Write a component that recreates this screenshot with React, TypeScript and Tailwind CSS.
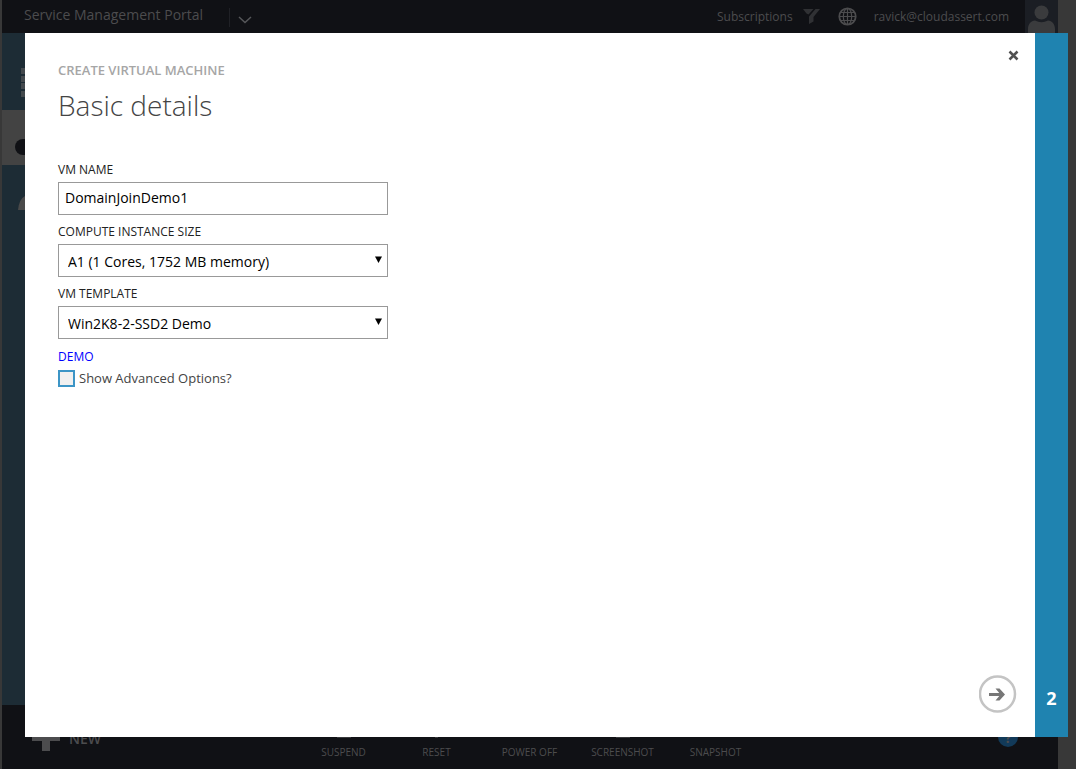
import { useState } from "react";
import type { ReactNode } from "react";

const commands = [
  { label: "SUSPEND", hint: "w-[14px]" },
  { label: "RESET", hint: "w-[3px]" },
  { label: "POWER OFF", hint: "w-0" },
  { label: "SCREENSHOT", hint: "w-[14px]" },
  { label: "SNAPSHOT", hint: "w-0" },
];

const sizes = ["A1 (1 Cores, 1752 MB memory)", "A2 (2 Cores, 3584 MB memory)"];
const templates = ["Win2K8-2-SSD2 Demo"];

const fieldClass =
  "block h-[33px] w-full appearance-none rounded-none border border-[#999999] bg-white text-[14px] text-black outline-none";

function Field({ id, label, children }: { id: string; label: string; children: ReactNode }) {
  return (
    <div>
      <label htmlFor={id} className="block pt-[7px] pb-[2px] text-[12px] leading-[20px] text-[#222222]">
        {label}
      </label>
      {children}
    </div>
  );
}

function SelectField({ id, label, options }: { id: string; label: string; options: string[] }) {
  return (
    <Field id={id} label={label}>
      <div className="relative">
        <select id={id} className={`${fieldClass} pt-[2px] pr-6 pl-[9px]`}>
          {options.map((o) => (
            <option key={o}>{o}</option>
          ))}
        </select>
        <svg className="pointer-events-none absolute top-3 right-[6px] h-[7px] w-[7px]" viewBox="0 0 7 7">
          <path d="M0 0.5h7L3.5 7z" fill="#000" />
        </svg>
      </div>
    </Field>
  );
}

function Header() {
  return (
    <header className="flex h-[33px] shrink-0 bg-[#101115] text-[#4c4c4e]">
      <div className="flex flex-1 pl-[22px]">
        <h1 className="text-[14px] leading-[30px]">Service Management Portal</h1>
        <button aria-label="Open menu" className="mt-2 ml-[26px] flex h-[19px] items-center border-l border-[#202126] pl-2">
          <svg width="14" height="8" viewBox="0 0 14 8" className="mt-1" fill="none" stroke="#56575a" strokeWidth="1.5">
            <path d="M1 1l6 5.5L13 1" />
          </svg>
        </button>
      </div>
      <div className="flex items-center text-[12px]">
        <button className="flex items-center gap-[10px]">
          Subscriptions
          <svg width="17" height="15" viewBox="0 0 17 15" fill="#303134">
            <path d="M0 0h10.500L5.500 5.500 3.500 4.500z" />
            <path d="M12.500 0H17L10.500 8v4.500L6 15V7.500z" />
          </svg>
        </button>
        <button aria-label="Language" className="ml-[18px]">
          <svg width="19" height="19" viewBox="0 0 19 19" fill="none" stroke="#4c4c4e" strokeWidth="1.5">
            <circle cx="9.5" cy="9.5" r="8.2" strokeWidth="1.8" />
            <ellipse cx="9.5" cy="9.5" rx="4.2" ry="8" strokeWidth="1.2" />
            <path d="M9.5 1.5v16M1.5 9.5h16M2.5 5.5h14M2.5 13.5h14" strokeWidth="1.2" />
          </svg>
        </button>
        <span className="ml-[17px]">ravick@cloudassert.com</span>
        <div className="ml-4 h-[33px] w-[33px] bg-[#1b1e24]">
          <svg width="33" height="33" viewBox="0 0 33 33" fill="#3a3b3d">
            <circle cx="16.5" cy="12.5" r="7" />
            <path d="M3 33v-4c0-5 3-8 7-8.500q6.500 3.500 13 0c4 .5 7 3.500 7 8.500v4z" />
          </svg>
        </div>
      </div>
    </header>
  );
}

function Sidebar() {
  return (
    <nav className="flex w-[60px] flex-1 flex-col bg-[#1d2c35]">
      <button aria-label="All items" className="h-[77px]">
        <svg width="24" height="30" viewBox="0 0 24 30" className="mt-[22px] ml-[19px]" fill="#43494d">
          <path d="M0 0h24v6H0zM0 8h24v6H0zM0 15h24v6H0zM0 23h24v6H0z" />
        </svg>
      </button>
      <button aria-label="Virtual machines" className="h-[55px] bg-[#434343]">
        <svg width="30" height="16" viewBox="0 0 30 16" className="mt-[18px] ml-[13px]">
          <rect width="30" height="16" rx="8" fill="#101115" />
        </svg>
      </button>
      <button aria-label="Users" className="h-[77px]">
        <svg width="26" height="16" viewBox="0 0 26 16" className="ml-[16px]" fill="#4a4a4a">
          <path d="M0 14Q1 3 7 0h12q6 3 7 14z" />
        </svg>
      </button>
    </nav>
  );
}

function CommandBar() {
  return (
    <footer className="flex h-16 shrink-0 bg-[#101115] text-[#4c4c4e]">
      <button className="flex h-full w-[295px] items-start gap-[9px] pt-[18px] pl-[30px]">
        <svg width="28" height="28" viewBox="0 0 28 28" fill="#4c4c4e">
          <path d="M10 0h8v10h10v8H18v10h-8V18H0v-8h10z" />
        </svg>
        <span className="mt-[6px] text-[14px] leading-5 font-semibold">NEW</span>
      </button>
      {commands.map((c) => (
        <button key={c.label} className="flex w-[93px] flex-col items-center pt-[20px] text-[10px] leading-5">
          <span className={`${c.hint} h-[13px] bg-[#38393b]`} />
          <span className="mt-1">{c.label}</span>
        </button>
      ))}
      <button aria-label="Help" className="mt-[22px] mr-10 ml-auto flex h-5 w-5 items-center justify-center rounded-full bg-[#123a59] text-[14px] font-bold">
        ?
      </button>
    </footer>
  );
}

function CreateVmDialog() {
  const [name, setName] = useState("DomainJoinDemo1");
  const [advanced, setAdvanced] = useState(false);

  return (
    <div role="dialog" aria-label="Create virtual machine" className="fixed top-[33px] right-2 bottom-8 left-[25px] flex bg-white">
      <div className="flex flex-1 flex-col pl-[33px]">
        <div className="flex justify-between">
          <div className="pt-[27px]">
            <p className="text-[13px] leading-[20px] font-semibold text-[#a6a6a6]">CREATE VIRTUAL MACHINE</p>
            <h2 className="mt-[5px] text-[28px] leading-[40px] font-light text-[#444444]">Basic details</h2>
          </div>
          <button aria-label="Close" className="mt-4 mr-4 h-3 w-[11px]">
            <svg width="11" height="11" viewBox="0 0 11 11" fill="none" stroke="#505050" strokeWidth="2.5">
              <path d="M1.500 1.500l8 8M9.500 1.500l-8 8" />
            </svg>
          </button>
        </div>

        <form className="mt-7 w-[330px]">
          <Field id="vm-name" label="VM NAME">
            <input id="vm-name" type="text" value={name} onChange={(e) => setName(e.target.value)} className={`${fieldClass} px-[6px] pb-[2px]`} />
          </Field>
          <SelectField id="size" label="COMPUTE INSTANCE SIZE" options={sizes} />
          <SelectField id="template" label="VM TEMPLATE" options={templates} />
          <a href="#demo" className="mt-2 block w-fit text-[12px] leading-[20px] text-[#0000ff]">
            DEMO
          </a>
          <div className="mt-[3px] flex items-center gap-1">
            <input
              id="advanced"
              type="checkbox"
              checked={advanced}
              onChange={(e) => setAdvanced(e.target.checked)}
              className="h-[17px] w-[17px] appearance-none border-2 border-[#3c95c6] bg-[#f0f0f0] checked:bg-[#3c95c6]"
            />
            <label htmlFor="advanced" className="text-[13px] leading-[17px] text-[#444444]">
              Show Advanced Options?
            </label>
          </div>
        </form>

        <button aria-label="Next" className="mt-auto mr-[18px] mb-6 self-end">
          <svg width="38" height="38" viewBox="0 0 38 38" fill="none">
            <circle cx="18.500" cy="19" r="17.500" stroke="#c4c4c4" strokeWidth="2.500" />
            <path d="M10 19.500h14" stroke="#777777" strokeWidth="3" />
            <path d="M16.500 13.500h4l5.500 6-5.500 6h-4l5-6z" fill="#777777" />
          </svg>
        </button>
      </div>
      <button className="flex w-[33px] items-end justify-center bg-[#1f83b0] pb-[27px] text-[18px] leading-6 font-bold text-white">
        2
      </button>
    </div>
  );
}

export default function App() {
  return (
    <div className="min-h-screen bg-[#383838] pr-[18px] pl-[2px] font-['Open_Sans',sans-serif]">
      <div className="flex min-h-screen flex-col">
        <Header />
        <Sidebar />
        <CommandBar />
      </div>
      <CreateVmDialog />
    </div>
  );
}
